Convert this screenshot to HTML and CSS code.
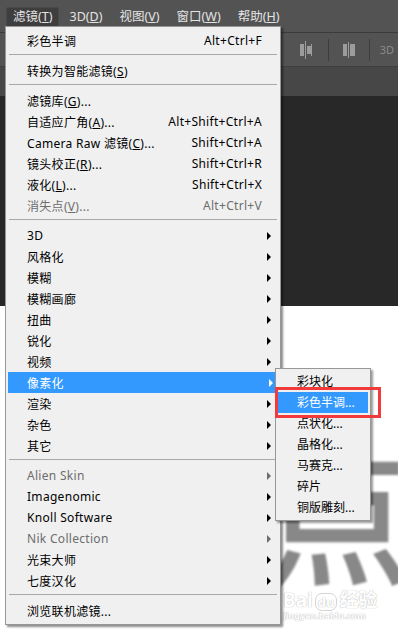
FILE: index.html
```html
<!DOCTYPE html>
<html lang="zh-CN">
<head>
  <meta charset="UTF-8">
  <meta name="viewport" content="width=device-width, initial-scale=1.0">
  <title>滤镜 - 像素化 - 彩色半调</title>
  <link rel="stylesheet" href="styles.css">
</head>
<body>
  <div class="ps">
    <div class="menubar">
      <span class="mb-item active">滤镜(<u>T</u>)</span>
      <span class="mb-item">3D(<u>D</u>)</span>
      <span class="mb-item">视图(<u>V</u>)</span>
      <span class="mb-item">窗口(<u>W</u>)</span>
      <span class="mb-item">帮助(<u>H</u>)</span>
    </div>

    <div class="toolbar">
      <svg class="tool-icon" width="12" height="18" viewBox="0 0 12 18">
        <rect x="0" y="3" width="4" height="12" fill="#9c9c9c"/>
        <rect x="5" y="0" width="1" height="18" fill="#9c9c9c"/>
        <rect x="7" y="5" width="4" height="8" fill="#9c9c9c"/>
        <rect x="11" y="3" width="1" height="12" fill="#9c9c9c"/>
      </svg>
      <span class="tool-sep"></span>
      <svg class="tool-icon second" width="12" height="18" viewBox="0 0 12 18">
        <rect x="0" y="3" width="4" height="12" fill="#9c9c9c"/>
        <rect x="5" y="1" width="1" height="16" fill="#9c9c9c"/>
        <rect x="7" y="3" width="5" height="12" fill="#9c9c9c"/>
      </svg>
      <span class="tool-sep"></span>
      <span class="tool-3d">3D</span>
    </div>

    <div class="tabbar"></div>
    <div class="stage-dark"></div>

    <div class="stage-white">
      <div class="big-glyph">点</div>
      <div class="watermark">
        <div class="wm-logo">Bai<span class="wm-du">du</span>经验</div>
        <div class="wm-url">jingyan.baidu.com</div>
      </div>
    </div>

    <!-- 滤镜 dropdown -->
    <div class="menu">
      <div class="item"><span class="label">彩色半调</span><span class="key">Alt+Ctrl+F</span><span class="arrow-col"></span></div>
      <div class="sep"></div>
      <div class="item"><span class="label">转换为智能滤镜(<u>S</u>)</span><span class="arrow-col"></span></div>
      <div class="sep"></div>
      <div class="item"><span class="label">滤镜库(<u>G</u>)...</span><span class="arrow-col"></span></div>
      <div class="item"><span class="label">自适应广角(<u>A</u>)...</span><span class="key">Alt+Shift+Ctrl+A</span><span class="arrow-col"></span></div>
      <div class="item"><span class="label">Camera Raw 滤镜(<u>C</u>)...</span><span class="key">Shift+Ctrl+A</span><span class="arrow-col"></span></div>
      <div class="item"><span class="label">镜头校正(<u>R</u>)...</span><span class="key">Shift+Ctrl+R</span><span class="arrow-col"></span></div>
      <div class="item"><span class="label">液化(<u>L</u>)...</span><span class="key">Shift+Ctrl+X</span><span class="arrow-col"></span></div>
      <div class="item disabled"><span class="label">消失点(<u>V</u>)...</span><span class="key">Alt+Ctrl+V</span><span class="arrow-col"></span></div>
      <div class="sep"></div>
      <div class="item"><span class="label">3D</span><span class="arrow-col"><i class="arrow"></i></span></div>
      <div class="item"><span class="label">风格化</span><span class="arrow-col"><i class="arrow"></i></span></div>
      <div class="item"><span class="label">模糊</span><span class="arrow-col"><i class="arrow"></i></span></div>
      <div class="item"><span class="label">模糊画廊</span><span class="arrow-col"><i class="arrow"></i></span></div>
      <div class="item"><span class="label">扭曲</span><span class="arrow-col"><i class="arrow"></i></span></div>
      <div class="item"><span class="label">锐化</span><span class="arrow-col"><i class="arrow"></i></span></div>
      <div class="item"><span class="label">视频</span><span class="arrow-col"><i class="arrow"></i></span></div>
      <div class="item selected"><span class="label">像素化</span><span class="arrow-col"><i class="arrow"></i></span></div>
      <div class="item"><span class="label">渲染</span><span class="arrow-col"><i class="arrow"></i></span></div>
      <div class="item"><span class="label">杂色</span><span class="arrow-col"><i class="arrow"></i></span></div>
      <div class="item"><span class="label">其它</span><span class="arrow-col"><i class="arrow"></i></span></div>
      <div class="sep"></div>
      <div class="item disabled"><span class="label">Alien Skin</span><span class="arrow-col"><i class="arrow"></i></span></div>
      <div class="item"><span class="label">Imagenomic</span><span class="arrow-col"><i class="arrow"></i></span></div>
      <div class="item"><span class="label">Knoll Software</span><span class="arrow-col"><i class="arrow"></i></span></div>
      <div class="item disabled"><span class="label">Nik Collection</span><span class="arrow-col"><i class="arrow"></i></span></div>
      <div class="item"><span class="label">光束大师</span><span class="arrow-col"><i class="arrow"></i></span></div>
      <div class="item"><span class="label">七度汉化</span><span class="arrow-col"><i class="arrow"></i></span></div>
      <div class="sep"></div>
      <div class="item"><span class="label">浏览联机滤镜...</span><span class="arrow-col"></span></div>
    </div>

    <!-- 像素化 submenu -->
    <div class="submenu">
      <div class="sub-item">彩块化</div>
      <div class="sub-item selected">彩色半调...</div>
      <div class="sub-item">点状化...</div>
      <div class="sub-item">晶格化...</div>
      <div class="sub-item">马赛克...</div>
      <div class="sub-item">碎片</div>
      <div class="sub-item">铜版雕刻...</div>
    </div>

    <div class="red-box"></div>
  </div>
</body>
</html>
```

FILE: styles.css
```css
body {
  margin: 0;
  padding: 0;
  font-family: "Noto Sans", "Noto Sans CJK SC", sans-serif;
  background-color: #fff;
}

.ps {
  position: relative;
  width: 398px;
  height: 635px;
  overflow: hidden;
  display: flex;
  flex-direction: column;
}

/* top bars */
.menubar {
  height: 32px;
  background-color: #535353;
  border-bottom: 1px solid #3b3b3b;
  display: flex;
  align-items: center;
  padding-left: 6px;
  gap: 3px;
}

.mb-item {
  color: #e4e4e4;
  font-size: 12.5px;
  line-height: 18px;
  padding: 0 6px;
  border: 1px solid transparent;
  margin-top: 1px;
}

.mb-item.active {
  background-color: #3e3e3e;
  border-color: #484848;
  border-radius: 2px;
}

.toolbar {
  height: 33px;
  background-color: #535353;
  border-bottom: 1px solid #3e3e3e;
  display: flex;
  align-items: center;
  justify-content: flex-end;
  padding-right: 4px;
}

.tool-icon {
  margin-right: 16px;
}

.tool-icon.second {
  margin-right: 14px;
}

.tool-sep {
  width: 1px;
  height: 22px;
  background-color: #3c3c3c;
  margin-right: 14px;
}

.tool-3d {
  color: #8a8a8a;
  font-size: 11px;
  margin-left: -4px;
}

.tabbar {
  height: 29px;
  background-color: #474747;
}

.stage-dark {
  height: 210px;
  background-color: #282828;
}

.stage-white {
  flex: 1;
  background-color: #fff;
  position: relative;
}

.big-glyph {
  position: absolute;
  left: 262px;
  top: 128px;
  font-size: 150px;
  line-height: 1;
  color: #888;
  font-family: "Noto Sans CJK SC", sans-serif;
  font-weight: 500;
  filter: blur(1px);
}

.watermark {
  position: absolute;
  left: 283px;
  top: 283px;
  color: #fff;
  text-shadow: 0 0 1px #bdbdbd, 0 0 1px #bdbdbd;
}

.wm-logo {
  font-size: 19px;
  font-weight: bold;
  line-height: 22px;
  font-family: "Noto Sans", "Noto Sans CJK SC", sans-serif;
}

.wm-du {
  display: inline-block;
  font-size: 13px;
  line-height: 16px;
  padding: 0 2px;
  margin: 0 2px;
  border: 1px solid #d4d4d4;
  border-radius: 7px;
}

.wm-url {
  font-size: 9px;
  line-height: 10px;
  font-weight: bold;
}

/* dropdown */
.menu {
  position: absolute;
  left: 5px;
  top: 26px;
  width: 274px;
  padding: 3px 0;
  background-color: #f0f0f0;
  border: 1px solid #979797;
  box-shadow: 2px 2px 2px rgba(0, 0, 0, 0.45);
  font-size: 12px;
  letter-spacing: 0.3px;
  color: #000;
}

.item {
  display: flex;
  align-items: center;
  height: 21px;
  margin: 0 2px;
  padding-left: 19px;
}

.item .label {
  flex: 1;
  white-space: nowrap;
}

.item .key {
  white-space: nowrap;
}

.arrow-col {
  width: 16px;
  display: flex;
  align-items: center;
}

.arrow {
  display: block;
  margin-left: 5px;
  width: 0;
  height: 0;
  border-left: 4px solid #000;
  border-top: 4px solid transparent;
  border-bottom: 4px solid transparent;
}

.item.disabled {
  color: #6d6d6d;
}

.item.disabled .arrow {
  border-left-color: #6d6d6d;
}

.item.selected {
  background-color: #3399ff;
  color: #fff;
  margin-right: 0;
}

.item.selected .arrow {
  border-left-color: #fff;
}

.sep {
  margin: 3px 3px 5px 3px;
  border-top: 1px solid #a8a8a8;
}

/* submenu */
.submenu {
  position: absolute;
  left: 275px;
  top: 368px;
  width: 94px;
  padding: 2px 0;
  background-color: #f0f0f0;
  border: 1px solid #979797;
  box-shadow: 2px 2px 2px rgba(0, 0, 0, 0.4);
  font-size: 12px;
}

.sub-item {
  height: 21px;
  line-height: 21px;
  margin: 0 2px 0 1px;
  padding-left: 20px;
  white-space: nowrap;
}

.sub-item.selected {
  background-color: #3399ff;
  color: #fff;
}

.red-box {
  position: absolute;
  left: 275px;
  top: 387px;
  width: 106px;
  height: 31px;
  box-sizing: border-box;
  border: 3px solid #f23a3a;
}
```
